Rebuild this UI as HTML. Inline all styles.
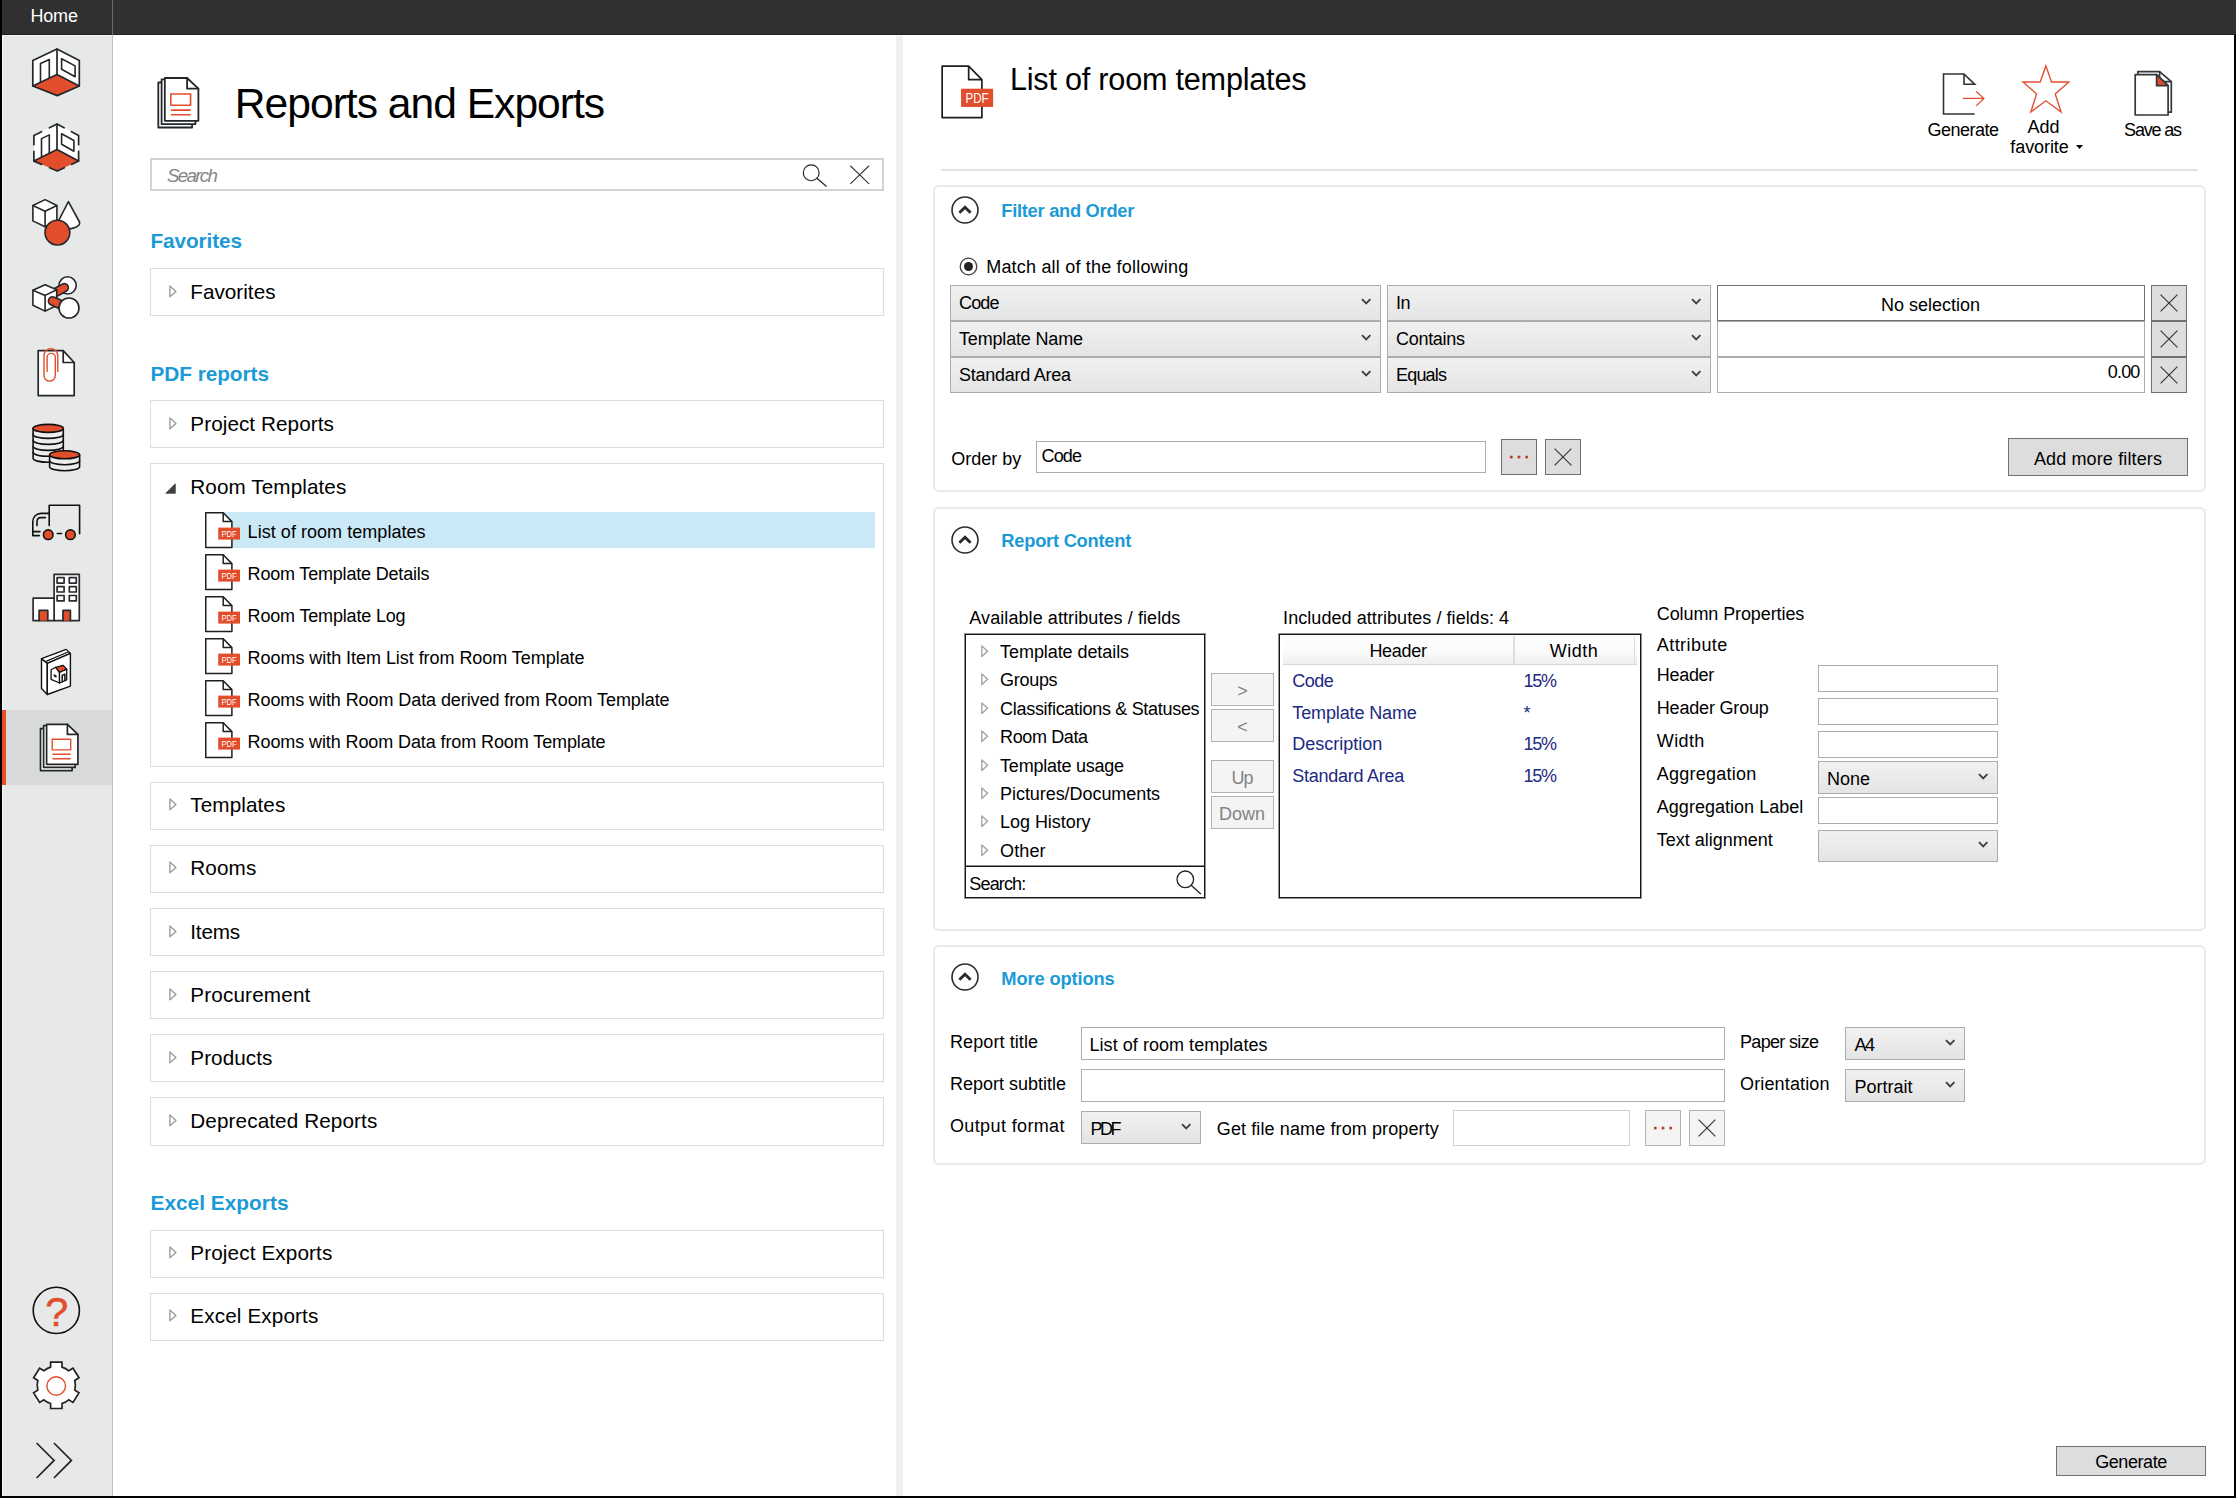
<!DOCTYPE html>
<html lang="en"><head><meta charset="utf-8"><title>Reports and Exports</title>
<style>
html,body{margin:0;padding:0;background:#fff;}
body{width:2236px;height:1498px;position:relative;overflow:hidden;font-family:"Liberation Sans",sans-serif;font-size:18px;color:#000;}
body>div,body>svg,body>span{position:absolute;box-sizing:border-box;}
.t{white-space:nowrap;display:block;}
.t>span{display:inline-block}
svg{overflow:visible}
.cb{background:linear-gradient(#f1f1f1,#e4e4e4);border:1px solid #acacac;}
.in{background:#fff;border:1px solid #abadb3;}
.bt{background:#dddddd;border:1px solid #707070;}
.bd{background:#f4f4f4;border:1px solid #adb2b5;}
.grp{background:#fff;border:1px solid #dcdcdc;}
.sec{background:#fff;border:2px solid #e8eaea;border-radius:6px;}
</style></head><body>
<div style="left:0px;top:0px;width:2236px;height:35px;background:#303030"></div>
<div style="left:0px;top:34px;width:2236px;height:1px;background:#202020"></div>
<div style="left:112px;top:0px;width:1px;height:35px;background:#6a6c6c"></div>
<span class="t" style="top:7.46px;font-size:18px;line-height:18px;color:#fff;letter-spacing:-0.205px;left:30.5px;">Home</span>
<div style="left:0px;top:35px;width:113px;height:1463px;background:#e7e9e8"></div>
<div style="left:0px;top:35px;width:112px;height:1px;background:#f3f5f5"></div>
<div style="left:112px;top:35px;width:1px;height:1463px;background:#c0c2c2"></div>
<div style="left:2px;top:710px;width:110px;height:75px;background:#d8dada"></div>
<div style="left:2px;top:36px;width:1px;height:1460px;background:#f3f5f5"></div>
<div style="left:2px;top:710px;width:4px;height:75px;background:#e34d2a"></div>
<div style="left:895.5px;top:36px;width:7.5px;height:1462px;background:#f0f0f0"></div>
<div style="left:0px;top:0px;width:2px;height:1498px;background:#000"></div>
<div style="left:2234px;top:35px;width:2px;height:1463px;background:#000"></div>
<div style="left:0px;top:1496px;width:2236px;height:2px;background:#000"></div>
<span class="t" style="top:82.46px;font-size:42.6px;line-height:42.6px;color:#000;letter-spacing:-0.999px;left:234.8px;">Reports and Exports</span>
<div style="left:150px;top:158px;width:734px;height:33px;background:#fff;border:2px solid #d2d2d2"></div>
<span class="t" style="top:167.15px;font-size:18.8px;line-height:18.8px;color:#858585;letter-spacing:-1.703px;left:167px;font-style:italic;">Search</span>
<span class="t" style="top:231.46px;font-size:20.8px;line-height:20.8px;color:#1c9ad6;font-weight:700;letter-spacing:-0.111px;left:150.5px;">Favorites</span>
<span class="t" style="top:364.16px;font-size:20.8px;line-height:20.8px;color:#1c9ad6;font-weight:700;letter-spacing:-0.053px;left:150.5px;">PDF reports</span>
<span class="t" style="top:1193.46px;font-size:20.8px;line-height:20.8px;color:#1c9ad6;font-weight:700;letter-spacing:0.036px;left:150.5px;">Excel Exports</span>
<div class="grp" style="left:150px;top:268px;width:734px;height:48px;"></div>
<svg style="left:169px;top:285.40000000000003px" width="9" height="14" viewBox="0 0 9 14" ><path d="M0.9 1 L7.0 6.4 L0.9 11.8 Z" fill="#fff" stroke="#9b9b9b" stroke-width="1.35" stroke-linejoin="round"/></svg>
<span class="t" style="top:282.46px;font-size:20.7px;line-height:20.7px;color:#000;letter-spacing:0.015px;left:190.3px;">Favorites</span>
<div class="grp" style="left:150px;top:400px;width:734px;height:48px;"></div>
<svg style="left:169px;top:417.40000000000003px" width="9" height="14" viewBox="0 0 9 14" ><path d="M0.9 1 L7.0 6.4 L0.9 11.8 Z" fill="#fff" stroke="#9b9b9b" stroke-width="1.35" stroke-linejoin="round"/></svg>
<span class="t" style="top:414.46px;font-size:20.7px;line-height:20.7px;color:#000;letter-spacing:0.073px;left:190.3px;">Project Reports</span>
<div class="grp" style="left:150px;top:463px;width:734px;height:304px;"></div>
<svg style="left:165px;top:482.5px" width="11" height="11" viewBox="0 0 11 11" ><path d="M10.3 0.8 L10.3 10.3 L0.8 10.3 Z" fill="#404040" stroke="#404040" stroke-width="0.8" stroke-linejoin="round"/></svg>
<span class="t" style="top:477.46px;font-size:20.7px;line-height:20.7px;color:#000;letter-spacing:0.089px;left:190.3px;">Room Templates</span>
<div class="grp" style="left:150px;top:782px;width:734px;height:48px;"></div>
<svg style="left:169px;top:798.4px" width="9" height="14" viewBox="0 0 9 14" ><path d="M0.9 1 L7.0 6.4 L0.9 11.8 Z" fill="#fff" stroke="#9b9b9b" stroke-width="1.35" stroke-linejoin="round"/></svg>
<span class="t" style="top:795.46px;font-size:20.7px;line-height:20.7px;color:#000;letter-spacing:0.088px;left:190.3px;">Templates</span>
<div class="grp" style="left:150px;top:845px;width:734px;height:48px;"></div>
<svg style="left:169px;top:861.4px" width="9" height="14" viewBox="0 0 9 14" ><path d="M0.9 1 L7.0 6.4 L0.9 11.8 Z" fill="#fff" stroke="#9b9b9b" stroke-width="1.35" stroke-linejoin="round"/></svg>
<span class="t" style="top:858.46px;font-size:20.7px;line-height:20.7px;color:#000;letter-spacing:0.117px;left:190.3px;">Rooms</span>
<div class="grp" style="left:150px;top:908px;width:734px;height:48px;"></div>
<svg style="left:169px;top:925.4px" width="9" height="14" viewBox="0 0 9 14" ><path d="M0.9 1 L7.0 6.4 L0.9 11.8 Z" fill="#fff" stroke="#9b9b9b" stroke-width="1.35" stroke-linejoin="round"/></svg>
<span class="t" style="top:922.46px;font-size:20.7px;line-height:20.7px;color:#000;letter-spacing:-0.195px;left:190.3px;">Items</span>
<div class="grp" style="left:150px;top:971px;width:734px;height:48px;"></div>
<svg style="left:169px;top:988.4px" width="9" height="14" viewBox="0 0 9 14" ><path d="M0.9 1 L7.0 6.4 L0.9 11.8 Z" fill="#fff" stroke="#9b9b9b" stroke-width="1.35" stroke-linejoin="round"/></svg>
<span class="t" style="top:985.46px;font-size:20.7px;line-height:20.7px;color:#000;letter-spacing:0.156px;left:190.3px;">Procurement</span>
<div class="grp" style="left:150px;top:1034px;width:734px;height:48px;"></div>
<svg style="left:169px;top:1051.3999999999999px" width="9" height="14" viewBox="0 0 9 14" ><path d="M0.9 1 L7.0 6.4 L0.9 11.8 Z" fill="#fff" stroke="#9b9b9b" stroke-width="1.35" stroke-linejoin="round"/></svg>
<span class="t" style="top:1048.46px;font-size:20.7px;line-height:20.7px;color:#000;letter-spacing:0.051px;left:190.3px;">Products</span>
<div class="grp" style="left:150px;top:1097px;width:734px;height:49px;"></div>
<svg style="left:169px;top:1114.3999999999999px" width="9" height="14" viewBox="0 0 9 14" ><path d="M0.9 1 L7.0 6.4 L0.9 11.8 Z" fill="#fff" stroke="#9b9b9b" stroke-width="1.35" stroke-linejoin="round"/></svg>
<span class="t" style="top:1111.46px;font-size:20.7px;line-height:20.7px;color:#000;letter-spacing:0.109px;left:190.3px;">Deprecated Reports</span>
<div class="grp" style="left:150px;top:1230px;width:734px;height:48px;"></div>
<svg style="left:169px;top:1246.3999999999999px" width="9" height="14" viewBox="0 0 9 14" ><path d="M0.9 1 L7.0 6.4 L0.9 11.8 Z" fill="#fff" stroke="#9b9b9b" stroke-width="1.35" stroke-linejoin="round"/></svg>
<span class="t" style="top:1243.46px;font-size:20.7px;line-height:20.7px;color:#000;letter-spacing:0.123px;left:190.3px;">Project Exports</span>
<div class="grp" style="left:150px;top:1293px;width:734px;height:48px;"></div>
<svg style="left:169px;top:1309.3999999999999px" width="9" height="14" viewBox="0 0 9 14" ><path d="M0.9 1 L7.0 6.4 L0.9 11.8 Z" fill="#fff" stroke="#9b9b9b" stroke-width="1.35" stroke-linejoin="round"/></svg>
<span class="t" style="top:1306.46px;font-size:20.7px;line-height:20.7px;color:#000;letter-spacing:0.128px;left:190.3px;">Excel Exports</span>
<div style="left:222px;top:512px;width:653px;height:36px;background:#cbe8f6"></div>
<svg style="left:205px;top:512px" width="36.0" height="37.0" viewBox="0 0 36 37"><path d="M0.75 0.75 H18.2 L26.9 9.6 V35.4 H0.75 Z" fill="#fff" stroke="#1f1f1f" stroke-width="1.50" stroke-linejoin="round"/><path d="M18.2 0.75 V9.6 H26.9" fill="none" stroke="#1f1f1f" stroke-width="1.50" stroke-linejoin="round"/><rect x="13.2" y="15.6" width="21.8" height="12" fill="#e24e2c"/><text x="24.10" y="25" font-size="9.6" fill="#fff" text-anchor="middle" font-family="Liberation Sans,sans-serif" textLength="15.2" lengthAdjust="spacingAndGlyphs">PDF</text></svg>
<span class="t" style="top:523.07px;font-size:18px;line-height:18px;color:#000;letter-spacing:0.044px;left:247.6px;">List of room templates</span>
<svg style="left:205px;top:554px" width="36.0" height="37.0" viewBox="0 0 36 37"><path d="M0.75 0.75 H18.2 L26.9 9.6 V35.4 H0.75 Z" fill="#fff" stroke="#1f1f1f" stroke-width="1.50" stroke-linejoin="round"/><path d="M18.2 0.75 V9.6 H26.9" fill="none" stroke="#1f1f1f" stroke-width="1.50" stroke-linejoin="round"/><rect x="13.2" y="15.6" width="21.8" height="12" fill="#e24e2c"/><text x="24.10" y="25" font-size="9.6" fill="#fff" text-anchor="middle" font-family="Liberation Sans,sans-serif" textLength="15.2" lengthAdjust="spacingAndGlyphs">PDF</text></svg>
<span class="t" style="top:565.07px;font-size:18px;line-height:18px;color:#000;letter-spacing:-0.188px;left:247.6px;">Room Template Details</span>
<svg style="left:205px;top:596px" width="36.0" height="37.0" viewBox="0 0 36 37"><path d="M0.75 0.75 H18.2 L26.9 9.6 V35.4 H0.75 Z" fill="#fff" stroke="#1f1f1f" stroke-width="1.50" stroke-linejoin="round"/><path d="M18.2 0.75 V9.6 H26.9" fill="none" stroke="#1f1f1f" stroke-width="1.50" stroke-linejoin="round"/><rect x="13.2" y="15.6" width="21.8" height="12" fill="#e24e2c"/><text x="24.10" y="25" font-size="9.6" fill="#fff" text-anchor="middle" font-family="Liberation Sans,sans-serif" textLength="15.2" lengthAdjust="spacingAndGlyphs">PDF</text></svg>
<span class="t" style="top:607.07px;font-size:18px;line-height:18px;color:#000;letter-spacing:-0.173px;left:247.6px;">Room Template Log</span>
<svg style="left:205px;top:638px" width="36.0" height="37.0" viewBox="0 0 36 37"><path d="M0.75 0.75 H18.2 L26.9 9.6 V35.4 H0.75 Z" fill="#fff" stroke="#1f1f1f" stroke-width="1.50" stroke-linejoin="round"/><path d="M18.2 0.75 V9.6 H26.9" fill="none" stroke="#1f1f1f" stroke-width="1.50" stroke-linejoin="round"/><rect x="13.2" y="15.6" width="21.8" height="12" fill="#e24e2c"/><text x="24.10" y="25" font-size="9.6" fill="#fff" text-anchor="middle" font-family="Liberation Sans,sans-serif" textLength="15.2" lengthAdjust="spacingAndGlyphs">PDF</text></svg>
<span class="t" style="top:649.07px;font-size:18px;line-height:18px;color:#000;letter-spacing:-0.047px;left:247.6px;">Rooms with Item List from Room Template</span>
<svg style="left:205px;top:680px" width="36.0" height="37.0" viewBox="0 0 36 37"><path d="M0.75 0.75 H18.2 L26.9 9.6 V35.4 H0.75 Z" fill="#fff" stroke="#1f1f1f" stroke-width="1.50" stroke-linejoin="round"/><path d="M18.2 0.75 V9.6 H26.9" fill="none" stroke="#1f1f1f" stroke-width="1.50" stroke-linejoin="round"/><rect x="13.2" y="15.6" width="21.8" height="12" fill="#e24e2c"/><text x="24.10" y="25" font-size="9.6" fill="#fff" text-anchor="middle" font-family="Liberation Sans,sans-serif" textLength="15.2" lengthAdjust="spacingAndGlyphs">PDF</text></svg>
<span class="t" style="top:691.07px;font-size:18px;line-height:18px;color:#000;letter-spacing:-0.084px;left:247.6px;">Rooms with Room Data derived from Room Template</span>
<svg style="left:205px;top:722px" width="36.0" height="37.0" viewBox="0 0 36 37"><path d="M0.75 0.75 H18.2 L26.9 9.6 V35.4 H0.75 Z" fill="#fff" stroke="#1f1f1f" stroke-width="1.50" stroke-linejoin="round"/><path d="M18.2 0.75 V9.6 H26.9" fill="none" stroke="#1f1f1f" stroke-width="1.50" stroke-linejoin="round"/><rect x="13.2" y="15.6" width="21.8" height="12" fill="#e24e2c"/><text x="24.10" y="25" font-size="9.6" fill="#fff" text-anchor="middle" font-family="Liberation Sans,sans-serif" textLength="15.2" lengthAdjust="spacingAndGlyphs">PDF</text></svg>
<span class="t" style="top:733.07px;font-size:18px;line-height:18px;color:#000;letter-spacing:-0.100px;left:247.6px;">Rooms with Room Data from Room Template</span>
<svg style="left:940.7px;top:65.1px" width="54.72" height="56.24" viewBox="0 0 36 37"><path d="M0.75 0.75 H18.2 L26.9 9.6 V34.6 H0.75 Z" fill="#fff" stroke="#1f1f1f" stroke-width="1.12" stroke-linejoin="round"/><path d="M18.2 0.75 V9.6 H26.9" fill="none" stroke="#1f1f1f" stroke-width="1.12" stroke-linejoin="round"/><rect x="13.2" y="15.6" width="21.1" height="12" fill="#e24e2c"/><text x="23.75" y="25" font-size="9.6" fill="#fff" text-anchor="middle" font-family="Liberation Sans,sans-serif" textLength="15.2" lengthAdjust="spacingAndGlyphs">PDF</text></svg>
<span class="t" style="top:64.25px;font-size:30.6px;line-height:30.6px;color:#000;letter-spacing:-0.208px;left:1009.9px;">List of room templates</span>
<div style="left:940.5px;top:168.5px;width:1257.5px;height:2px;background:#e2e2e2"></div>
<div class="sec" style="left:933px;top:185px;width:1273px;height:307px;"></div>
<svg style="left:951px;top:195.6px" width="28" height="28" viewBox="0 0 28 28" ><circle cx="14" cy="14" r="13" fill="#fff" stroke="#2b2b2b" stroke-width="1.6"/><path d="M8.4 16.8 L14 11.2 L19.6 16.8" fill="none" stroke="#2b2b2b" stroke-width="2.9" stroke-linejoin="miter"/></svg>
<span class="t" style="top:202.46px;font-size:18.3px;line-height:18.3px;color:#1c9ad6;font-weight:700;letter-spacing:-0.276px;left:1001.3px;">Filter and Order</span>
<div class="sec" style="left:933px;top:507px;width:1273px;height:424px;"></div>
<svg style="left:951px;top:525.6px" width="28" height="28" viewBox="0 0 28 28" ><circle cx="14" cy="14" r="13" fill="#fff" stroke="#2b2b2b" stroke-width="1.6"/><path d="M8.4 16.8 L14 11.2 L19.6 16.8" fill="none" stroke="#2b2b2b" stroke-width="2.9" stroke-linejoin="miter"/></svg>
<span class="t" style="top:532.46px;font-size:18.3px;line-height:18.3px;color:#1c9ad6;font-weight:700;letter-spacing:-0.233px;left:1001.3px;">Report Content</span>
<div class="sec" style="left:933px;top:945px;width:1273px;height:220px;"></div>
<svg style="left:951px;top:963px" width="28" height="28" viewBox="0 0 28 28" ><circle cx="14" cy="14" r="13" fill="#fff" stroke="#2b2b2b" stroke-width="1.6"/><path d="M8.4 16.8 L14 11.2 L19.6 16.8" fill="none" stroke="#2b2b2b" stroke-width="2.9" stroke-linejoin="miter"/></svg>
<span class="t" style="top:969.85px;font-size:18.3px;line-height:18.3px;color:#1c9ad6;font-weight:700;letter-spacing:-0.115px;left:1001.3px;">More options</span>
<span class="t" style="top:120.66px;font-size:18px;line-height:18px;color:#000;letter-spacing:-0.509px;left:1563px;width:800px;text-align:center;">Generate</span>
<span class="t" style="top:118.16px;font-size:18px;line-height:18px;color:#000;letter-spacing:-0.016px;left:1643.5px;width:800px;text-align:center;">Add</span>
<span class="t" style="top:137.76px;font-size:18px;line-height:18px;color:#000;letter-spacing:-0.076px;left:2010.3px;">favorite</span>
<svg style="left:2076px;top:144.5px" width="7" height="4" viewBox="0 0 7 4" ><path d="M0 0 H7 L3.5 4 Z" fill="#000"/></svg>
<span class="t" style="top:120.66px;font-size:18px;line-height:18px;color:#000;letter-spacing:-1.174px;left:1752.5px;width:800px;text-align:center;">Save as</span>
<svg style="left:958.5px;top:257px" width="19" height="19" viewBox="0 0 19 19" ><circle cx="9.5" cy="9.5" r="8.3" fill="#fff" stroke="#3c3c3c" stroke-width="1.25"/><circle cx="9.5" cy="9.5" r="4.5" fill="#222"/></svg>
<span class="t" style="top:257.96px;font-size:18px;line-height:18px;color:#000;letter-spacing:0.196px;left:986.2px;">Match all of the following</span>
<div class="cb" style="left:950px;top:285px;width:431px;height:36px;"></div>
<svg style="left:1360.8px;top:298.4px" width="10.4" height="7" viewBox="0 0 10.4 7" ><path d="M1 1.2 L5.2 5.4 L9.4 1.2" fill="none" stroke="#404040" stroke-width="1.9"/></svg>
<span class="t" style="top:294.46px;font-size:18px;line-height:18px;color:#000;letter-spacing:-0.844px;left:959px;">Code</span>
<div class="cb" style="left:1387px;top:285px;width:324px;height:36px;"></div>
<svg style="left:1690.8px;top:298.4px" width="10.4" height="7" viewBox="0 0 10.4 7" ><path d="M1 1.2 L5.2 5.4 L9.4 1.2" fill="none" stroke="#404040" stroke-width="1.9"/></svg>
<span class="t" style="top:294.46px;font-size:18px;line-height:18px;color:#000;letter-spacing:-0.516px;left:1396px;">In</span>
<div class="bt" style="left:2151px;top:285px;width:36px;height:36px;"></div>
<svg style="left:2160.0px;top:294.0px" width="18" height="18" viewBox="0 0 18 18" ><path d="M0.6 0.6 L17.4 17.4 M17.4 0.6 L0.6 17.4" stroke="#3a3a3a" stroke-width="1.25" fill="none"/></svg>
<div class="cb" style="left:950px;top:321px;width:431px;height:36px;"></div>
<svg style="left:1360.8px;top:334.4px" width="10.4" height="7" viewBox="0 0 10.4 7" ><path d="M1 1.2 L5.2 5.4 L9.4 1.2" fill="none" stroke="#404040" stroke-width="1.9"/></svg>
<span class="t" style="top:330.46px;font-size:18px;line-height:18px;color:#000;letter-spacing:-0.172px;left:959px;">Template Name</span>
<div class="cb" style="left:1387px;top:321px;width:324px;height:36px;"></div>
<svg style="left:1690.8px;top:334.4px" width="10.4" height="7" viewBox="0 0 10.4 7" ><path d="M1 1.2 L5.2 5.4 L9.4 1.2" fill="none" stroke="#404040" stroke-width="1.9"/></svg>
<span class="t" style="top:330.46px;font-size:18px;line-height:18px;color:#000;letter-spacing:-0.292px;left:1396px;">Contains</span>
<div class="bt" style="left:2151px;top:321px;width:36px;height:36px;"></div>
<svg style="left:2160.0px;top:330.0px" width="18" height="18" viewBox="0 0 18 18" ><path d="M0.6 0.6 L17.4 17.4 M17.4 0.6 L0.6 17.4" stroke="#3a3a3a" stroke-width="1.25" fill="none"/></svg>
<div class="cb" style="left:950px;top:357px;width:431px;height:36px;"></div>
<svg style="left:1360.8px;top:370.4px" width="10.4" height="7" viewBox="0 0 10.4 7" ><path d="M1 1.2 L5.2 5.4 L9.4 1.2" fill="none" stroke="#404040" stroke-width="1.9"/></svg>
<span class="t" style="top:366.46px;font-size:18px;line-height:18px;color:#000;letter-spacing:-0.258px;left:959px;">Standard Area</span>
<div class="cb" style="left:1387px;top:357px;width:324px;height:36px;"></div>
<svg style="left:1690.8px;top:370.4px" width="10.4" height="7" viewBox="0 0 10.4 7" ><path d="M1 1.2 L5.2 5.4 L9.4 1.2" fill="none" stroke="#404040" stroke-width="1.9"/></svg>
<span class="t" style="top:366.46px;font-size:18px;line-height:18px;color:#000;letter-spacing:-0.809px;left:1396px;">Equals</span>
<div class="bt" style="left:2151px;top:357px;width:36px;height:36px;"></div>
<svg style="left:2160.0px;top:366.0px" width="18" height="18" viewBox="0 0 18 18" ><path d="M0.6 0.6 L17.4 17.4 M17.4 0.6 L0.6 17.4" stroke="#3a3a3a" stroke-width="1.25" fill="none"/></svg>
<div style="left:1717px;top:285px;width:428px;height:36px;background:#fff;border:1px solid #6f6f6f"></div>
<span class="t" style="top:296.46px;font-size:18px;line-height:18px;color:#000;letter-spacing:-0.006px;left:1530.5px;width:800px;text-align:center;">No selection</span>
<div class="in" style="left:1717px;top:321px;width:428px;height:36px;"></div>
<div class="in" style="left:1717px;top:357px;width:428px;height:36px;"></div>
<span class="t" style="top:363.46px;font-size:18px;line-height:18px;color:#000;letter-spacing:-0.849px;left:1339.5px;width:800px;text-align:right;">0.00</span>
<span class="t" style="top:450.07px;font-size:18px;line-height:18px;color:#000;letter-spacing:-0.004px;left:951.3px;">Order by</span>
<div class="in" style="left:1036px;top:441px;width:450px;height:32px;"></div>
<span class="t" style="top:447.07px;font-size:18px;line-height:18px;color:#000;letter-spacing:-0.844px;left:1041.5px;">Code</span>
<div class="bt" style="left:1501px;top:439px;width:36px;height:36px;"></div>
<svg style="left:1509.0px;top:455.3px" width="20" height="4" viewBox="0 0 20 4" ><circle cx="2.3" cy="2" r="1.55" fill="#b5432a"/><circle cx="10" cy="2" r="1.55" fill="#b5432a"/><circle cx="17.7" cy="2" r="1.55" fill="#b5432a"/></svg>
<div class="bt" style="left:1545px;top:439px;width:36px;height:36px;"></div>
<svg style="left:1554.0px;top:448.0px" width="18" height="18" viewBox="0 0 18 18" ><path d="M0.6 0.6 L17.4 17.4 M17.4 0.6 L0.6 17.4" stroke="#3a3a3a" stroke-width="1.25" fill="none"/></svg>
<div class="bt" style="left:2008px;top:438px;width:180px;height:37.5px;"></div>
<span class="t" style="top:449.66px;font-size:18px;line-height:18px;color:#000;letter-spacing:0.130px;left:1698px;width:800px;text-align:center;">Add more filters</span>
<span class="t" style="top:608.96px;font-size:18px;line-height:18px;color:#000;letter-spacing:0.079px;left:969.3px;">Available attributes / fields</span>
<div style="left:965px;top:634px;width:240px;height:264px;background:#fff;border:1px solid #141414;box-shadow:0 0 0 1px rgba(0,0,0,0.42)"></div>
<div style="left:965px;top:865px;width:240px;height:2px;background:linear-gradient(rgba(0,0,0,0.45) 50%,#141414 50%)"></div>
<svg style="left:980.6px;top:645.1px" width="8" height="13" viewBox="0 0 8 13" ><path d="M0.8 0.9 L6.6 6.2 L0.8 11.6 Z" fill="#fff" stroke="#a0a0a0" stroke-width="1.3" stroke-linejoin="round"/></svg>
<span class="t" style="top:643.46px;font-size:18px;line-height:18px;color:#000;letter-spacing:-0.072px;left:1000.1px;">Template details</span>
<svg style="left:980.6px;top:673.1px" width="8" height="13" viewBox="0 0 8 13" ><path d="M0.8 0.9 L6.6 6.2 L0.8 11.6 Z" fill="#fff" stroke="#a0a0a0" stroke-width="1.3" stroke-linejoin="round"/></svg>
<span class="t" style="top:671.46px;font-size:18px;line-height:18px;color:#000;letter-spacing:-0.306px;left:1000.1px;">Groups</span>
<svg style="left:980.6px;top:702.1px" width="8" height="13" viewBox="0 0 8 13" ><path d="M0.8 0.9 L6.6 6.2 L0.8 11.6 Z" fill="#fff" stroke="#a0a0a0" stroke-width="1.3" stroke-linejoin="round"/></svg>
<span class="t" style="top:700.46px;font-size:18px;line-height:18px;color:#000;letter-spacing:-0.304px;left:1000.1px;">Classifications &amp; Statuses</span>
<svg style="left:980.6px;top:730.1px" width="8" height="13" viewBox="0 0 8 13" ><path d="M0.8 0.9 L6.6 6.2 L0.8 11.6 Z" fill="#fff" stroke="#a0a0a0" stroke-width="1.3" stroke-linejoin="round"/></svg>
<span class="t" style="top:728.46px;font-size:18px;line-height:18px;color:#000;letter-spacing:-0.381px;left:1000.1px;">Room Data</span>
<svg style="left:980.6px;top:759.1px" width="8" height="13" viewBox="0 0 8 13" ><path d="M0.8 0.9 L6.6 6.2 L0.8 11.6 Z" fill="#fff" stroke="#a0a0a0" stroke-width="1.3" stroke-linejoin="round"/></svg>
<span class="t" style="top:757.46px;font-size:18px;line-height:18px;color:#000;letter-spacing:-0.238px;left:1000.1px;">Template usage</span>
<svg style="left:980.6px;top:787.1px" width="8" height="13" viewBox="0 0 8 13" ><path d="M0.8 0.9 L6.6 6.2 L0.8 11.6 Z" fill="#fff" stroke="#a0a0a0" stroke-width="1.3" stroke-linejoin="round"/></svg>
<span class="t" style="top:785.46px;font-size:18px;line-height:18px;color:#000;letter-spacing:-0.062px;left:1000.1px;">Pictures/Documents</span>
<svg style="left:980.6px;top:815.1px" width="8" height="13" viewBox="0 0 8 13" ><path d="M0.8 0.9 L6.6 6.2 L0.8 11.6 Z" fill="#fff" stroke="#a0a0a0" stroke-width="1.3" stroke-linejoin="round"/></svg>
<span class="t" style="top:813.46px;font-size:18px;line-height:18px;color:#000;letter-spacing:-0.055px;left:1000.1px;">Log History</span>
<svg style="left:980.6px;top:844.1px" width="8" height="13" viewBox="0 0 8 13" ><path d="M0.8 0.9 L6.6 6.2 L0.8 11.6 Z" fill="#fff" stroke="#a0a0a0" stroke-width="1.3" stroke-linejoin="round"/></svg>
<span class="t" style="top:842.46px;font-size:18px;line-height:18px;color:#000;letter-spacing:0.117px;left:1000.1px;">Other</span>
<span class="t" style="top:874.66px;font-size:18px;line-height:18px;color:#000;letter-spacing:-0.841px;left:969.3px;">Search:</span>
<svg style="left:1175px;top:869px" width="28" height="28" viewBox="0 0 28 28" ><circle cx="10.3" cy="10.3" r="8.3" fill="none" stroke="#222" stroke-width="1.3"/><path d="M16.2 16.2 L25.8 25" stroke="#222" stroke-width="1.3"/></svg>
<div class="bd" style="left:1210.5px;top:673px;width:63.5px;height:32.5px;"></div>
<span class="t" style="top:682.26px;font-size:18px;line-height:18px;color:#838383;letter-spacing:-1.016px;left:842px;width:800px;text-align:center;">&gt;</span>
<div class="bd" style="left:1210.5px;top:709px;width:63.5px;height:32.5px;"></div>
<span class="t" style="top:718.26px;font-size:18px;line-height:18px;color:#838383;letter-spacing:-1.016px;left:842px;width:800px;text-align:center;">&lt;</span>
<div class="bd" style="left:1210.5px;top:760.2px;width:63.5px;height:32.5px;"></div>
<span class="t" style="top:768.66px;font-size:18px;line-height:18px;color:#838383;letter-spacing:-1.016px;left:842px;width:800px;text-align:center;">Up</span>
<div class="bd" style="left:1210.5px;top:796.2px;width:63.5px;height:32.5px;"></div>
<span class="t" style="top:804.66px;font-size:18px;line-height:18px;color:#838383;letter-spacing:-0.010px;left:842px;width:800px;text-align:center;">Down</span>
<span class="t" style="top:608.96px;font-size:18px;line-height:18px;color:#000;letter-spacing:0.062px;left:1283.1px;">Included attributes / fields: 4</span>
<div style="left:1279px;top:634px;width:362px;height:264px;background:#fff;border:1px solid #141414;box-shadow:0 0 0 1px rgba(0,0,0,0.42)"></div>
<div style="left:1282.5px;top:636px;width:354.5px;height:29px;background:linear-gradient(#ffffff,#fafafa 55%,#efefef);border-bottom:1.5px solid #d8d8d8"></div>
<div style="left:1513px;top:636px;width:1.5px;height:27.5px;background:#dedede"></div>
<div style="left:1633.5px;top:636px;width:1.5px;height:27.5px;background:#dedede"></div>
<span class="t" style="top:642.07px;font-size:18px;line-height:18px;color:#000;letter-spacing:-0.309px;left:998px;width:800px;text-align:center;">Header</span>
<span class="t" style="top:642.07px;font-size:18px;line-height:18px;color:#000;letter-spacing:0.496px;left:1174px;width:800px;text-align:center;">Width</span>
<span class="t" style="top:671.85px;font-size:18px;line-height:18px;color:#1b2a80;letter-spacing:-0.510px;left:1292.3px;">Code</span>
<span class="t" style="top:671.85px;font-size:18px;line-height:18px;color:#1b2a80;letter-spacing:-1.266px;left:1523.5px;">15%</span>
<span class="t" style="top:703.59px;font-size:18px;line-height:18px;color:#1b2a80;letter-spacing:-0.130px;left:1292.3px;">Template Name</span>
<span class="t" style="top:703.59px;font-size:18px;line-height:18px;color:#1b2a80;letter-spacing:-0.016px;left:1523.5px;">*</span>
<span class="t" style="top:735.32px;font-size:18px;line-height:18px;color:#1b2a80;letter-spacing:-0.005px;left:1292.3px;">Description</span>
<span class="t" style="top:735.32px;font-size:18px;line-height:18px;color:#1b2a80;letter-spacing:-1.266px;left:1523.5px;">15%</span>
<span class="t" style="top:767.05px;font-size:18px;line-height:18px;color:#1b2a80;letter-spacing:-0.258px;left:1292.3px;">Standard Area</span>
<span class="t" style="top:767.05px;font-size:18px;line-height:18px;color:#1b2a80;letter-spacing:-1.266px;left:1523.5px;">15%</span>
<span class="t" style="top:605.07px;font-size:18px;line-height:18px;color:#000;letter-spacing:-0.098px;left:1656.8px;">Column Properties</span>
<span class="t" style="top:636.35px;font-size:18px;line-height:18px;color:#000;letter-spacing:0.432px;left:1656.8px;">Attribute</span>
<span class="t" style="top:666.35px;font-size:18px;line-height:18px;color:#000;letter-spacing:-0.309px;left:1656.8px;">Header</span>
<span class="t" style="top:699.46px;font-size:18px;line-height:18px;color:#000;letter-spacing:-0.189px;left:1656.8px;">Header Group</span>
<span class="t" style="top:731.96px;font-size:18px;line-height:18px;color:#000;letter-spacing:0.371px;left:1656.8px;">Width</span>
<span class="t" style="top:765.26px;font-size:18px;line-height:18px;color:#000;letter-spacing:0.242px;left:1656.8px;">Aggregation</span>
<span class="t" style="top:798.35px;font-size:18px;line-height:18px;color:#000;letter-spacing:0.023px;left:1656.8px;">Aggregation Label</span>
<span class="t" style="top:831.46px;font-size:18px;line-height:18px;color:#000;letter-spacing:-0.005px;left:1656.8px;">Text alignment</span>
<div class="in" style="left:1818px;top:665px;width:180px;height:27px;"></div>
<div class="in" style="left:1818px;top:698px;width:180px;height:27px;"></div>
<div class="in" style="left:1818px;top:731px;width:180px;height:27px;"></div>
<div class="cb" style="left:1818px;top:761.3px;width:180px;height:32.5px;"></div>
<svg style="left:1977.8px;top:772.9499999999999px" width="10.4" height="7" viewBox="0 0 10.4 7" ><path d="M1 1.2 L5.2 5.4 L9.4 1.2" fill="none" stroke="#404040" stroke-width="1.9"/></svg>
<span class="t" style="top:770.35px;font-size:18px;line-height:18px;color:#000;letter-spacing:-0.010px;left:1827px;">None</span>
<div class="in" style="left:1818px;top:797px;width:180px;height:27px;"></div>
<div class="cb" style="left:1818px;top:830px;width:180px;height:32px;"></div>
<svg style="left:1977.8px;top:841.4px" width="10.4" height="7" viewBox="0 0 10.4 7" ><path d="M1 1.2 L5.2 5.4 L9.4 1.2" fill="none" stroke="#404040" stroke-width="1.9"/></svg>
<span class="t" style="top:1033.35px;font-size:18px;line-height:18px;color:#000;letter-spacing:0.087px;left:950px;">Report title</span>
<div class="in" style="left:1081px;top:1027px;width:644px;height:33px;"></div>
<span class="t" style="top:1035.85px;font-size:18px;line-height:18px;color:#000;letter-spacing:0.044px;left:1089.5px;">List of room templates</span>
<span class="t" style="top:1075.16px;font-size:18px;line-height:18px;color:#000;letter-spacing:-0.004px;left:950px;">Report subtitle</span>
<div class="in" style="left:1081px;top:1069px;width:644px;height:33px;"></div>
<span class="t" style="top:1117.26px;font-size:18px;line-height:18px;color:#000;letter-spacing:0.370px;left:950px;">Output format</span>
<div class="cb" style="left:1081px;top:1111.2px;width:120px;height:32.5px;"></div>
<svg style="left:1180.8px;top:1122.8500000000001px" width="10.4" height="7" viewBox="0 0 10.4 7" ><path d="M1 1.2 L5.2 5.4 L9.4 1.2" fill="none" stroke="#404040" stroke-width="1.9"/></svg>
<span class="t" style="top:1119.76px;font-size:18px;line-height:18px;color:#000;letter-spacing:-2.500px;left:1090.6px;">PDF</span>
<span class="t" style="top:1119.76px;font-size:18px;line-height:18px;color:#000;letter-spacing:0.112px;left:1216.8px;">Get file name from property</span>
<div style="left:1453px;top:1110px;width:177px;height:36px;background:#fff;border:1px solid #cfd0d2"></div>
<div class="bd" style="left:1645px;top:1110px;width:36px;height:36px;"></div>
<svg style="left:1653.0px;top:1126.3px" width="20" height="4" viewBox="0 0 20 4" ><circle cx="2.3" cy="2" r="1.55" fill="#b5432a"/><circle cx="10" cy="2" r="1.55" fill="#b5432a"/><circle cx="17.7" cy="2" r="1.55" fill="#b5432a"/></svg>
<div class="bd" style="left:1689px;top:1110px;width:36px;height:36px;"></div>
<svg style="left:1698.0px;top:1119.0px" width="18" height="18" viewBox="0 0 18 18" ><path d="M0.6 0.6 L17.4 17.4 M17.4 0.6 L0.6 17.4" stroke="#3a3a3a" stroke-width="1.25" fill="none"/></svg>
<span class="t" style="top:1032.96px;font-size:18px;line-height:18px;color:#000;letter-spacing:-0.672px;left:1740px;">Paper size</span>
<div class="cb" style="left:1845px;top:1027.3px;width:120px;height:32.5px;"></div>
<svg style="left:1944.8px;top:1038.95px" width="10.4" height="7" viewBox="0 0 10.4 7" ><path d="M1 1.2 L5.2 5.4 L9.4 1.2" fill="none" stroke="#404040" stroke-width="1.9"/></svg>
<span class="t" style="top:1036.35px;font-size:18px;line-height:18px;color:#000;letter-spacing:-1.531px;left:1854.5px;">A4</span>
<span class="t" style="top:1074.96px;font-size:18px;line-height:18px;color:#000;letter-spacing:0.144px;left:1740px;">Orientation</span>
<div class="cb" style="left:1845px;top:1069.3px;width:120px;height:32.5px;"></div>
<svg style="left:1944.8px;top:1080.95px" width="10.4" height="7" viewBox="0 0 10.4 7" ><path d="M1 1.2 L5.2 5.4 L9.4 1.2" fill="none" stroke="#404040" stroke-width="1.9"/></svg>
<span class="t" style="top:1078.46px;font-size:18px;line-height:18px;color:#000;letter-spacing:-0.004px;left:1854.5px;">Portrait</span>
<div class="bt" style="left:2056px;top:1446px;width:150px;height:30px;"></div>
<span class="t" style="top:1453.07px;font-size:18px;line-height:18px;color:#000;letter-spacing:-0.438px;left:1731px;width:800px;text-align:center;">Generate</span>
<svg style="left:0;top:0;pointer-events:none" width="2236" height="1498" viewBox="0 0 2236 1498"><path d="M32.8 60.6 L57.0 49.1 L79.3 60.6 L79.3 86.0 L57.3 95.6 L32.8 86.0 Z" fill="#fff" stroke="none" stroke-width="1.6" stroke-linejoin="round" stroke-linecap="round" /><path d="M57.0 74.6 L79.3 86.0 L57.3 95.6 L32.8 86.0 Z" fill="#e24e2c" stroke="none" stroke-width="1.6" stroke-linejoin="round" stroke-linecap="round" /><path d="M32.8 60.6 L57.0 49.1 L79.3 60.6 L79.3 86.0 L57.3 95.6 L32.8 86.0 Z" fill="none" stroke="#23272a" stroke-width="1.7" stroke-linejoin="round" stroke-linecap="round" /><path d="M32.8 86.0 L57.0 74.6 L79.3 86.0" fill="none" stroke="#23272a" stroke-width="1.7" stroke-linejoin="round" stroke-linecap="round" /><path d="M57.0 49.1 L57.0 74.6" fill="none" stroke="#23272a" stroke-width="1.7" stroke-linejoin="round" stroke-linecap="round" /><path d="M40.5 82.0 L40.5 63.6 L49.3 59.6 L49.3 78.0" fill="none" stroke="#23272a" stroke-width="1.6" stroke-linejoin="round" stroke-linecap="round" /><path d="M61.6 58.7 L75.1 65.9 L75.1 76.7 L61.6 69.2 Z" fill="none" stroke="#23272a" stroke-width="1.6" stroke-linejoin="round" stroke-linecap="round" /><path d="M33.9 135.4 L57.0 124.1 L78.6 135.4 L78.6 161.1 L57.3 171.0 L33.9 161.1 Z" fill="#fff" stroke="none" stroke-width="1.6" stroke-linejoin="round" stroke-linecap="round" /><path d="M57.0 149.6 L78.6 161.1 L57.3 171.0 L33.9 161.1 Z" fill="#e24e2c" stroke="none" stroke-width="1.6" stroke-linejoin="round" stroke-linecap="round" /><path d="M49.4 127.8 L57.0 124.1 L64.1 127.8" fill="none" stroke="#23272a" stroke-width="1.7" stroke-linejoin="round" stroke-linecap="round" stroke-linecap="butt"/><path d="M41.5 131.7 L33.9 135.4 L33.9 144.7" fill="none" stroke="#23272a" stroke-width="1.7" stroke-linejoin="round" stroke-linecap="round" stroke-linecap="butt"/><path d="M33.9 151.3 L33.9 161.1 L41.6 164.4" fill="none" stroke="#23272a" stroke-width="1.7" stroke-linejoin="round" stroke-linecap="round" stroke-linecap="butt"/><path d="M49.6 167.7 L57.3 171.0 L64.3 167.7" fill="none" stroke="#23272a" stroke-width="1.7" stroke-linejoin="round" stroke-linecap="round" stroke-linecap="butt"/><path d="M71.6 164.4 L78.6 161.1 L78.6 151.3" fill="none" stroke="#23272a" stroke-width="1.7" stroke-linejoin="round" stroke-linecap="round" stroke-linecap="butt"/><path d="M78.6 144.7 L78.6 135.4 L71.5 131.7" fill="none" stroke="#23272a" stroke-width="1.7" stroke-linejoin="round" stroke-linecap="round" stroke-linecap="butt"/><path d="M33.9 161.1 L57.0 149.6 L78.6 161.1" fill="none" stroke="#23272a" stroke-width="1.7" stroke-linejoin="round" stroke-linecap="round" /><path d="M57.0 124.1 L57.0 149.6" fill="none" stroke="#23272a" stroke-width="1.7" stroke-linejoin="round" stroke-linecap="round" /><path d="M41.5 156.6 L41.5 138.6 L49.3 134.9 L49.3 153.0" fill="none" stroke="#23272a" stroke-width="1.6" stroke-linejoin="round" stroke-linecap="round" /><path d="M61.6 133.7 L73.9 140.5 L73.9 151.3 L61.6 144.2 Z" fill="none" stroke="#23272a" stroke-width="1.6" stroke-linejoin="round" stroke-linecap="round" /><path d="M68.4 201.7 L58.2 221.5 L66 229.0 C73 229.0 80.8 226.4 79.5 222.0 Z" fill="#fff" stroke="#23272a" stroke-width="1.6" stroke-linejoin="round" stroke-linecap="round" /><path d="M45.1 199.6 L56.9 205.5 L56.9 221.0 L45.1 226.7 L32.9 220.9 L32.9 205.5 Z" fill="#fff" stroke="#23272a" stroke-width="1.6" stroke-linejoin="round" stroke-linecap="round" /><path d="M32.9 205.5 L45.1 211.3 L56.9 205.5" fill="none" stroke="#23272a" stroke-width="1.6" stroke-linejoin="round" stroke-linecap="round" /><path d="M45.1 211.3 L45.1 226.7" fill="none" stroke="#23272a" stroke-width="1.6" stroke-linejoin="round" stroke-linecap="round" /><circle cx="57.4" cy="232.6" r="12.4" fill="#e24e2c" stroke="#23272a" stroke-width="1.6"/><circle cx="67.6" cy="285.4" r="8.6" fill="#fff" stroke="#23272a" stroke-width="1.6"/><path d="M55 292.8 L64.2 287.7" stroke="#23272a" stroke-width="9.8" stroke-linecap="round" fill="none"/><path d="M55 292.8 L64.2 287.7" stroke="#e24e2c" stroke-width="6.6" stroke-linecap="round" fill="none"/><path d="M45.1 284.7 L56.7 289.8 L56.7 305.5 L45.1 311.1 L32.9 305.2 L32.9 290.3 Z" fill="#fff" stroke="#23272a" stroke-width="1.6" stroke-linejoin="round" stroke-linecap="round" /><path d="M32.9 290.3 L45.1 295.4 L56.7 289.8" fill="none" stroke="#23272a" stroke-width="1.6" stroke-linejoin="round" stroke-linecap="round" /><path d="M45.1 295.4 L45.1 311.1" fill="none" stroke="#23272a" stroke-width="1.6" stroke-linejoin="round" stroke-linecap="round" /><path d="M52.6 301 L60 304.4" stroke="#23272a" stroke-width="10" stroke-linecap="round" fill="none"/><path d="M52.6 301 L60 304.4" stroke="#e24e2c" stroke-width="6.8" stroke-linecap="round" fill="none"/><circle cx="69.0" cy="308.0" r="10.0" fill="#fff" stroke="#23272a" stroke-width="1.6"/><path d="M38.2 350.6 H63.2 L74.2 362.5 V395.6 H38.2 Z" fill="#fff" stroke="#23272a" stroke-width="1.7" stroke-linejoin="round" stroke-linecap="round" /><path d="M63.2 350.6 V362.5 H74.2" fill="none" stroke="#23272a" stroke-width="1.7" stroke-linejoin="round" stroke-linecap="round" /><path d="M57.8 371.4 V355.6 A6.9 6.9 0 0 0 44.0 355.6 V375.5 A5.65 5.65 0 0 0 55.3 375.5 V357.5 A4.1 4.1 0 0 0 47.1 357.5 V371.4" fill="none" stroke="#e24e2c" stroke-width="1.4" stroke-linejoin="round" stroke-linecap="round" /><path d="M33.1 428.4 V458.29999999999995 A15.1 4.0 0 0 0 63.300000000000004 458.29999999999995 V428.4 Z" fill="#ececec" stroke="#111" stroke-width="1.6" stroke-linejoin="round" stroke-linecap="round" /><path d="M33.1 434.38 A15.1 4.0 0 0 0 63.300000000000004 434.38" fill="none" stroke="#111" stroke-width="1.6" stroke-linejoin="round" stroke-linecap="round" /><path d="M33.1 440.35999999999996 A15.1 4.0 0 0 0 63.300000000000004 440.35999999999996" fill="none" stroke="#111" stroke-width="1.6" stroke-linejoin="round" stroke-linecap="round" /><path d="M33.1 446.34 A15.1 4.0 0 0 0 63.300000000000004 446.34" fill="none" stroke="#111" stroke-width="1.6" stroke-linejoin="round" stroke-linecap="round" /><path d="M33.1 452.32 A15.1 4.0 0 0 0 63.300000000000004 452.32" fill="none" stroke="#111" stroke-width="1.6" stroke-linejoin="round" stroke-linecap="round" /><ellipse cx="48.2" cy="428.4" rx="15.1" ry="4.0" fill="#e24e2c" stroke="#111" stroke-width="1.6"/><path d="M49.599999999999994 454.8 V466.7 A15.0 4.0 0 0 0 79.6 466.7 V454.8 Z" fill="#ececec" stroke="#111" stroke-width="1.6" stroke-linejoin="round" stroke-linecap="round" /><path d="M49.599999999999994 460.75 A15.0 4.0 0 0 0 79.6 460.75" fill="none" stroke="#111" stroke-width="1.6" stroke-linejoin="round" stroke-linecap="round" /><ellipse cx="64.6" cy="454.8" rx="15.0" ry="4.0" fill="#e24e2c" stroke="#111" stroke-width="1.6"/><path d="M49.2 525.6 V505.2 H79.6 V533.7" fill="none" stroke="#111" stroke-width="1.6" stroke-linejoin="round" stroke-linecap="round" /><path d="M49.2 513.4 H41 A8.2 8.2 0 0 0 32.8 521.6 V535.6 H39.4 M32.8 531.6 H40" fill="none" stroke="#111" stroke-width="1.6" stroke-linejoin="round" stroke-linecap="round" /><path d="M45.4 517.6 H40.6 A3.6 3.6 0 0 0 37.0 521.2 V525.6" fill="none" stroke="#111" stroke-width="1.6" stroke-linejoin="round" stroke-linecap="round" /><path d="M57.3 533.5 H61.6" fill="none" stroke="#111" stroke-width="1.6" stroke-linejoin="round" stroke-linecap="round" /><circle cx="48.2" cy="534.7" r="4.8" fill="#e24e2c" stroke="#111" stroke-width="1.6"/><circle cx="70.4" cy="534.7" r="4.8" fill="#e24e2c" stroke="#111" stroke-width="1.6"/><path d="M54.1 574.4 H79.3 V620.6 H54.1 Z" fill="#fff" stroke="#2a2b30" stroke-width="1.7" stroke-linejoin="round" stroke-linecap="round" /><path d="M33.1 598.2 H54.1 V620.6 H33.1 Z" fill="#fff" stroke="#2a2b30" stroke-width="1.7" stroke-linejoin="round" stroke-linecap="round" /><path d="M57.1 577.7 h7 v5.4 h-7 Z" fill="none" stroke="#2a2b30" stroke-width="1.7" stroke-linejoin="round" stroke-linecap="round" /><path d="M57.1 586.6 h7 v5.4 h-7 Z" fill="none" stroke="#2a2b30" stroke-width="1.7" stroke-linejoin="round" stroke-linecap="round" /><path d="M57.1 595.5 h7 v5.4 h-7 Z" fill="none" stroke="#2a2b30" stroke-width="1.7" stroke-linejoin="round" stroke-linecap="round" /><path d="M69.3 577.7 h7 v5.4 h-7 Z" fill="none" stroke="#2a2b30" stroke-width="1.7" stroke-linejoin="round" stroke-linecap="round" /><path d="M69.3 586.6 h7 v5.4 h-7 Z" fill="none" stroke="#2a2b30" stroke-width="1.7" stroke-linejoin="round" stroke-linecap="round" /><path d="M69.3 595.5 h7 v5.4 h-7 Z" fill="none" stroke="#2a2b30" stroke-width="1.7" stroke-linejoin="round" stroke-linecap="round" /><path d="M39.1 620.6 V610.4 H47.8 V620.6" fill="#e24e2c" stroke="#2a2b30" stroke-width="1.7" stroke-linejoin="round" stroke-linecap="round" /><path d="M63.0 620.6 V610.4 H70.4 V620.6" fill="#e24e2c" stroke="#2a2b30" stroke-width="1.7" stroke-linejoin="round" stroke-linecap="round" /><path d="M41.5 658.7 L66.2 649.4 L70.4 653.4 L47.3 663.4 Z" fill="#fff" stroke="#111" stroke-width="1.3" stroke-linejoin="round" stroke-linecap="round" /><path d="M46.0 661.4 L68.6 651.8" fill="none" stroke="#111" stroke-width="1.2" stroke-linejoin="round" stroke-linecap="round" /><path d="M41.5 658.7 L47.3 663.4 L47.3 694.5 L41.5 688.6 Z" fill="#fff" stroke="#111" stroke-width="1.4" stroke-linejoin="round" stroke-linecap="round" /><path d="M47.3 663.4 L70.4 653.4 L70.4 686.1 L47.3 694.5 Z" fill="#fff" stroke="#111" stroke-width="1.4" stroke-linejoin="round" stroke-linecap="round" /><path d="M55.6 667.3 L63.2 665.3 L66.7 669.2 L59.5 672.5 Z" fill="#e24e2c" stroke="#111" stroke-width="1.2" stroke-linejoin="round" stroke-linecap="round" /><path d="M51.1 669.7 L55.6 667.3 L59.5 672.5 L59.5 683.0 L51.1 679.3 Z" fill="#fff" stroke="#111" stroke-width="1.3" stroke-linejoin="round" stroke-linecap="round" /><path d="M59.5 672.5 L66.7 669.2 L66.7 679.8 L59.5 683.0 Z" fill="#fff" stroke="#111" stroke-width="1.3" stroke-linejoin="round" stroke-linecap="round" /><path d="M62.2 681.8 L62.2 675.4 L64.9 674.3 L64.9 680.6" fill="none" stroke="#111" stroke-width="1.5" stroke-linejoin="round" stroke-linecap="round" /><path d="M54.4 674.8 L56.2 675.7 L56.2 677.2 L54.4 676.3 Z" fill="#111" stroke="#111" stroke-width="0.8" stroke-linejoin="round" stroke-linecap="round" /><path d="M40.5 728.6 H56.6 V744.4 H72.1 V770.6 H40.5 Z" fill="#fff" stroke="#23272a" stroke-width="1.7" stroke-linejoin="round" stroke-linecap="round" /><path d="M43.6 725.6 H56.6 V744.4 H75.1 V767.4 H43.6 Z" fill="#fff" stroke="#23272a" stroke-width="1.7" stroke-linejoin="round" stroke-linecap="round" /><path d="M46.6 724.4 H67.4 L77.9 734.4 V764.3 H46.6 Z" fill="#fff" stroke="#23272a" stroke-width="1.7" stroke-linejoin="round" stroke-linecap="round" /><path d="M67.4 724.4 V734.4 H77.9" fill="none" stroke="#23272a" stroke-width="1.7" stroke-linejoin="round" stroke-linecap="round" /><path d="M52.2 739.3 H70.7 V749.9 H52.2 Z" fill="none" stroke="#e24e2c" stroke-width="1.4" stroke-linejoin="round" stroke-linecap="round" /><path d="M52.9 754.3 H70.2 M52.9 758.7 H70.2" fill="none" stroke="#e24e2c" stroke-width="1.4" stroke-linejoin="round" stroke-linecap="round" /><path d="M158.3 82.5 H175.5 V99.4 H192.1 V127.5 H158.3 Z" fill="#fff" stroke="#23272a" stroke-width="1.8" stroke-linejoin="round" stroke-linecap="round" /><path d="M161.6 79.3 H175.5 V99.4 H195.4 V124.1 H161.6 Z" fill="#fff" stroke="#23272a" stroke-width="1.8" stroke-linejoin="round" stroke-linecap="round" /><path d="M164.8 78.0 H187.1 L198.4 88.7 V120.8 H164.8 Z" fill="#fff" stroke="#23272a" stroke-width="1.8" stroke-linejoin="round" stroke-linecap="round" /><path d="M187.1 78.0 V88.7 H198.4" fill="none" stroke="#23272a" stroke-width="1.8" stroke-linejoin="round" stroke-linecap="round" /><path d="M170.8 94.0 H190.6 V105.3 H170.8 Z" fill="none" stroke="#e24e2c" stroke-width="1.6" stroke-linejoin="round" stroke-linecap="round" /><path d="M171.6 110.1 H190.1 M171.6 114.8 H190.1" fill="none" stroke="#e24e2c" stroke-width="1.6" stroke-linejoin="round" stroke-linecap="round" /><circle cx="56.3" cy="1310.4" r="23.1" fill="none" stroke="#111" stroke-width="1.6"/><text x="56.7" y="1325.6" font-size="41.4" font-family="Liberation Sans,sans-serif" fill="#e24e2c" text-anchor="middle" stroke="#e24e2c" stroke-width="0.5">?</text><path d="M62.0 1367.1 L62.0 1362.1 L50.6 1362.1 L50.6 1367.1 A19.07 19.07 0 0 0 43.9 1370.8 L39.6 1368.2 L33.6 1377.8 L37.8 1380.5 A19.07 19.07 0 0 0 37.8 1390.1 L33.6 1392.8 L39.6 1402.4 L43.9 1399.8 A19.07 19.07 0 0 0 50.6 1403.5 L50.6 1408.5 L62.0 1408.5 L62.0 1403.5 A19.07 19.07 0 0 0 68.7 1399.8 L73.0 1402.4 L79.0 1392.8 L74.8 1390.1 A19.07 19.07 0 0 0 74.8 1380.5 L79.0 1377.8 L73.0 1368.2 L68.7 1370.8 A19.07 19.07 0 0 0 62.0 1367.1 Z" fill="#fff" stroke="#222" stroke-width="1.7" stroke-linejoin="miter"/><circle cx="56.2" cy="1386.0" r="9.3" fill="none" stroke="#e24e2c" stroke-width="1.4"/><path d="M36.6 1443 L54.1 1460.4 L36.6 1478 M53.9 1443 L71.4 1460.4 L53.9 1478" fill="none" stroke="#222" stroke-width="1.7" stroke-linecap="butt" stroke-linejoin="miter"/><circle cx="811.2" cy="172.8" r="7.9" fill="none" stroke="#222" stroke-width="1.15"/><path d="M816.9 178.3 L826.3 186.2" fill="none" stroke="#222" stroke-width="1.15" stroke-linejoin="round" stroke-linecap="round" /><path d="M850.6 166 L868.8 183.6 M868.8 166 L850.6 183.6" fill="none" stroke="#333" stroke-width="1.05" stroke-linejoin="round" stroke-linecap="round" /><path d="M1974.7 114 H1943.5 V74 H1964 L1974.7 84.3 H1964 V74" fill="none" stroke="#333" stroke-width="1.6" stroke-linejoin="miter"/><path d="M1962.9 98.4 H1983.6 M1976.2 91.5 L1983.9 98.4 L1976.2 105.9" fill="none" stroke="#e24e2c" stroke-width="1.25"/><path d="M2045.9 65.9 L2051.5 82.0 L2068.9 82.0 L2055.2 94.0 L2061.1 112.0 L2045.9 100.8 L2030.8 112.0 L2036.6 94.0 L2022.9 82.0 L2040.2 82.0 Z" fill="none" stroke="#e24e2c" stroke-width="1.35" stroke-linejoin="miter"/><path d="M2137.8 71.7 H2159.6 L2171.3 81.6 V112.2 H2137.8 Z" fill="#fff" stroke="#34363a" stroke-width="1.7" stroke-linejoin="round" stroke-linecap="round" /><path d="M2159.6 71.7 V81.6 H2171.3" fill="none" stroke="#34363a" stroke-width="1.7" stroke-linejoin="round" stroke-linecap="round" /><path d="M2135.2 74.6 H2156.6 L2168.1 85.6 V115 H2135.2 Z" fill="#fff" stroke="#34363a" stroke-width="1.7" stroke-linejoin="round" stroke-linecap="round" /><path d="M2156.6 74.6 V85.6 H2168.1 Z" fill="#e24e2c" stroke="#34363a" stroke-width="1.7" stroke-linejoin="round" stroke-linecap="round" /></svg>
</body></html>
